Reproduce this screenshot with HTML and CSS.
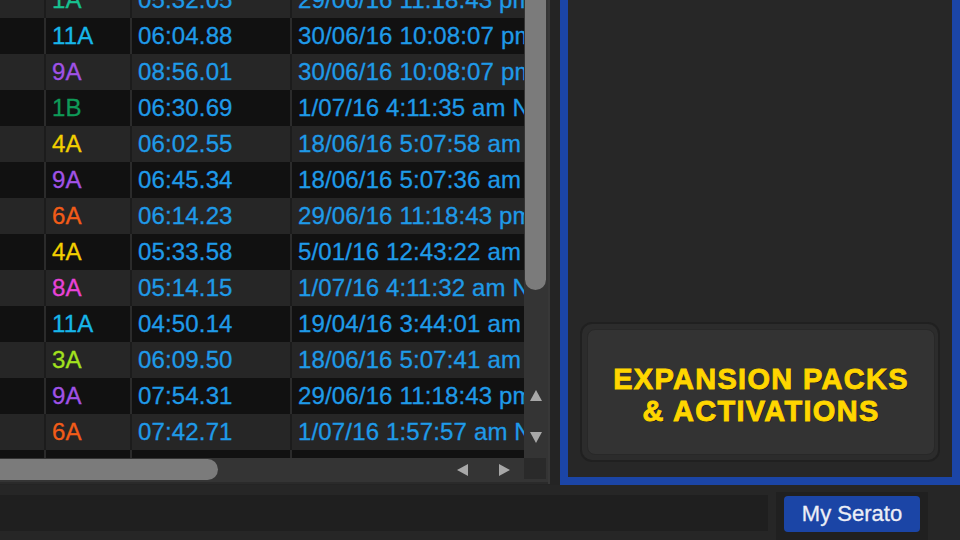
FILE: index.html
```html
<!DOCTYPE html>
<html lang="en">
<head>
<meta charset="utf-8">
<title>Serato Library</title>
<link rel="stylesheet" href="styles.css">
</head>
<body>
<div class="app">
  <div class="main">
    <section class="library">
      <div class="table-view">
        <div class="rows">
          <div class="row light"><div class="c c-pre"></div><div class="c c-key k-1a">1A</div><div class="c c-len">05:32.05</div><div class="c c-date">29/06/16 11:18:43 pm NZST</div></div>
          <div class="row dark"><div class="c c-pre"></div><div class="c c-key k-11a">11A</div><div class="c c-len">06:04.88</div><div class="c c-date">30/06/16 10:08:07 pm NZST</div></div>
          <div class="row light"><div class="c c-pre"></div><div class="c c-key k-9a">9A</div><div class="c c-len">08:56.01</div><div class="c c-date">30/06/16 10:08:07 pm NZST</div></div>
          <div class="row dark"><div class="c c-pre"></div><div class="c c-key k-1b">1B</div><div class="c c-len">06:30.69</div><div class="c c-date">1/07/16 4:11:35 am NZST</div></div>
          <div class="row light"><div class="c c-pre"></div><div class="c c-key k-4a">4A</div><div class="c c-len">06:02.55</div><div class="c c-date">18/06/16 5:07:58 am NZST</div></div>
          <div class="row dark"><div class="c c-pre"></div><div class="c c-key k-9a">9A</div><div class="c c-len">06:45.34</div><div class="c c-date">18/06/16 5:07:36 am NZST</div></div>
          <div class="row light"><div class="c c-pre"></div><div class="c c-key k-6a">6A</div><div class="c c-len">06:14.23</div><div class="c c-date">29/06/16 11:18:43 pm NZST</div></div>
          <div class="row dark"><div class="c c-pre"></div><div class="c c-key k-4a">4A</div><div class="c c-len">05:33.58</div><div class="c c-date">5/01/16 12:43:22 am NZDT</div></div>
          <div class="row light"><div class="c c-pre"></div><div class="c c-key k-8a">8A</div><div class="c c-len">05:14.15</div><div class="c c-date">1/07/16 4:11:32 am NZST</div></div>
          <div class="row dark"><div class="c c-pre"></div><div class="c c-key k-11a">11A</div><div class="c c-len">04:50.14</div><div class="c c-date">19/04/16 3:44:01 am NZST</div></div>
          <div class="row light"><div class="c c-pre"></div><div class="c c-key k-3a">3A</div><div class="c c-len">06:09.50</div><div class="c c-date">18/06/16 5:07:41 am NZST</div></div>
          <div class="row dark"><div class="c c-pre"></div><div class="c c-key k-9a">9A</div><div class="c c-len">07:54.31</div><div class="c c-date">29/06/16 11:18:43 pm NZST</div></div>
          <div class="row light"><div class="c c-pre"></div><div class="c c-key k-6a">6A</div><div class="c c-len">07:42.71</div><div class="c c-date">1/07/16 1:57:57 am NZST</div></div>
          <div class="row dark"><div class="c c-pre"></div><div class="c c-key k-4a">4A</div><div class="c c-len">06:21.07</div><div class="c c-date">1/07/16 4:11:29 am NZST</div></div>
        </div>
      </div>
      <div class="vscroll">
        <div class="vthumb"></div>
        <div class="varrows"><span class="tri up"></span><span class="tri down"></span></div>
      </div>
      <div class="hscroll">
        <div class="hthumb"></div>
        <div class="harrows"><span class="tri left"></span><span class="tri right"></span></div>
      </div>
      <div class="corner-cell"><div class="corner"></div></div>
    </section>
    <div class="gutter"></div>
    <aside class="panel">
      <div class="promo">
        <div class="promo-inner">EXPANSION PACKS<br>&amp; ACTIVATIONS</div>
      </div>
    </aside>
  </div>
  <footer class="status">
    <div class="field"></div>
    <div class="account"><button class="my-serato">My Serato</button></div>
  </footer>
</div>
</body>
</html>
```
FILE: styles.css
```css
* { box-sizing: border-box; }

html, body {
  margin: 0;
  padding: 0;
  width: 960px;
  height: 540px;
  overflow: hidden;
  background: #242424;
  font-family: "Liberation Sans", Arial, sans-serif;
}

.app {
  width: 960px;
  height: 540px;
  display: flex;
  flex-direction: column;
}

.main {
  height: 485px;
  display: flex;
  flex: none;
}

/* ---------- library table ---------- */
.library {
  width: 550px;
  height: 484px;
  display: grid;
  grid-template-columns: 524px 24px;
  grid-template-rows: 458px 26px;
  border-right: 2px solid #383838;
  background: #2a2a2a;
}

.table-view {
  overflow: hidden;
  background: #111;
}

.rows {
  margin-top: -18px;
}

.row {
  display: grid;
  grid-template-columns: 46px 86px 160px 1fr;
  height: 36px;
  font-size: 24px;
  line-height: 36px;
  color: #1f9ae8;
  letter-spacing: 0.15px;
  -webkit-text-stroke: 0.3px currentColor;
}

.row.light { background: #262626; }
.row.dark { background: #111111; }

.c {
  white-space: nowrap;
  overflow: hidden;
  padding-left: 6px;
}

.c-pre, .c-key, .c-len { border-right: 2px solid #1c1c1c; }
.row.dark .c-pre, .row.dark .c-key, .row.dark .c-len { border-right-color: #2b2b2b; }

.k-1a { color: #17c290; }
.k-11a { color: #17b6ea; }
.k-9a { color: #a052e6; }
.k-1b { color: #0e9a58; }
.k-4a { color: #f2cf00; }
.k-6a { color: #f25c18; }
.k-8a { color: #e843d8; }
.k-3a { color: #a2e21e; }

/* ---------- scrollbars ---------- */
.vscroll {
  background: #343434;
  display: flex;
  flex-direction: column;
}

.vthumb {
  height: 290px;
  margin: 0 2px 0 1px;
  background: #7b7b7b;
  border-radius: 0 0 11px 11px;
}

.varrows {
  margin-top: auto;
  padding-bottom: 15px;
  display: flex;
  flex-direction: column;
  align-items: center;
  gap: 31px;
}

.tri {
  display: block;
  width: 0;
  height: 0;
}

.tri.up {
  border-left: 6px solid transparent;
  border-right: 6px solid transparent;
  border-bottom: 11px solid #a8a8a8;
}

.tri.down {
  border-left: 6px solid transparent;
  border-right: 6px solid transparent;
  border-top: 11px solid #a8a8a8;
}

.tri.left {
  border-top: 6px solid transparent;
  border-bottom: 6px solid transparent;
  border-right: 11px solid #a8a8a8;
}

.tri.right {
  border-top: 6px solid transparent;
  border-bottom: 6px solid transparent;
  border-left: 11px solid #a8a8a8;
}

.hscroll {
  background: #343434;
  border-bottom: 2px solid #2a2a2a;
  display: flex;
  align-items: flex-start;
}

.hthumb {
  width: 218px;
  height: 21px;
  margin-top: 1px;
  background: #7b7b7b;
  border-radius: 0 11px 11px 0;
}

.harrows {
  margin-left: auto;
  margin-top: 6px;
  padding-right: 14px;
  display: flex;
  gap: 31px;
}

.corner-cell {
  background: #343434;
  border-bottom: 2px solid #2a2a2a;
}

.corner {
  width: 22px;
  height: 21px;
  background: #2a2a2a;
}

.gutter {
  width: 10px;
  background: #242424;
}

/* ---------- right panel ---------- */
.panel {
  width: 400px;
  height: 485px;
  background: #272727;
  border: 8px solid #1b45a6;
  border-top: 0;
  display: flex;
  flex-direction: column;
  justify-content: flex-end;
  padding: 0 12px 15px 12px;
}

.promo {
  height: 140px;
  border-radius: 12px;
  background: #2c2c2c;
  border: 2px solid #202020;
  padding: 5px 3px 5px 5px;
}

.promo-inner {
  height: 100%;
  border-radius: 8px;
  background: #333333;
  border: 1px solid #282828;
  display: flex;
  align-items: center;
  justify-content: center;
  text-align: center;
  color: #ffd600;
  font-family: "Liberation Sans", Arial, sans-serif;
  font-weight: 700;
  font-size: 29px;
  line-height: 32px;
  letter-spacing: 1.3px;
  -webkit-text-stroke: 0.9px #ffd600;
  text-shadow: 1px 1px 0 rgba(0, 0, 0, 0.55);
  padding-top: 6px;
}

/* ---------- status bar ---------- */
.status {
  flex: 1;
  display: flex;
  align-items: flex-start;
  background: #262626;
}

.field {
  width: 768px;
  height: 36px;
  margin-top: 10px;
  background: #1f1f1f;
}

.account {
  width: 152px;
  margin-left: 8px;
  margin-top: 7px;
  height: 48px;
  background: #202020;
  padding: 4px 8px;
}

.my-serato {
  display: block;
  width: 136px;
  height: 36px;
  border: 0;
  border-radius: 4px;
  background: #1b45a6;
  color: #eceef6;
  font-family: "Liberation Sans", Arial, sans-serif;
  font-size: 22px;
  line-height: 36px;
  padding: 0;
  text-align: center;
  -webkit-text-stroke: 0.3px #eceef6;
}
```
